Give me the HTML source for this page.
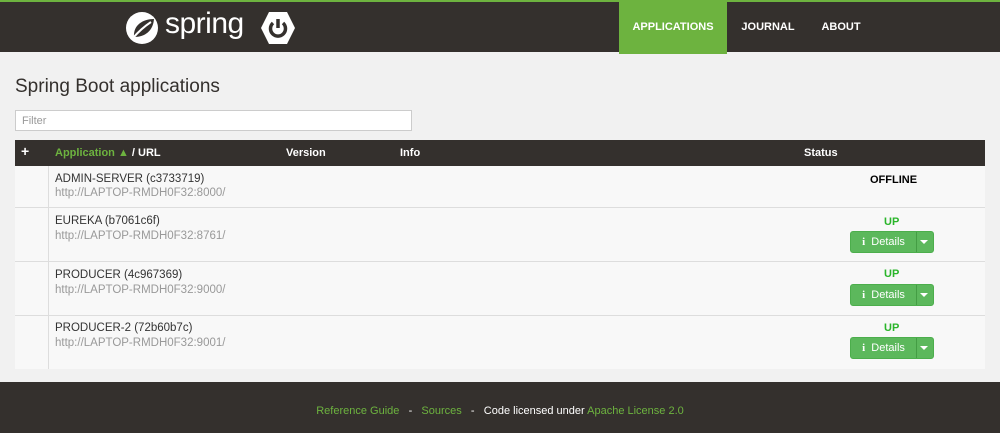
<!DOCTYPE html>
<html><head><style>
*{box-sizing:border-box;margin:0;padding:0}
html,body{width:1000px;height:433px;overflow:hidden}
body{background:#f1f1f1;font-family:"Liberation Sans",sans-serif;position:relative}
.nav{position:absolute;top:0;left:0;width:1000px;height:52px;background:#34302d;border-top:2px solid #6db33f}
.nav a{position:absolute;top:-2px;height:54px;line-height:54px;color:#fff;font-size:11px;font-weight:bold;text-align:center}
h1{position:absolute;left:15px;top:76px;font-size:19px;font-weight:normal;color:#34302d}
.filter{position:absolute;left:15px;top:110px;width:397px;height:21px;border:1px solid #ccc;background:#fff;font-size:11px;color:#999;padding:4px 6px}
.th{position:absolute;left:15px;top:140px;width:970px;height:26px;background:#34302d;color:#fff;font-size:11px;font-weight:bold}
.th span{position:absolute;top:7px}
.row{position:absolute;left:15px;width:970px;background:#f8f8f8;border-bottom:1px solid #ddd}
.row .c{position:absolute;left:33px;top:0;bottom:0;border-left:1px solid #ddd}
.n{position:absolute;left:40px;font-size:11.5px;color:#333}
.u{position:absolute;left:40px;font-size:11.5px;color:#999}
.st{position:absolute;font-size:11px;font-weight:bold}
.btn{position:absolute;left:835px;width:84px;height:22px;background:#5cb85c;border:1px solid #4cae4c;border-radius:3px;color:#fff;font-size:11px}
.btn .d{position:absolute;left:0;top:0;width:66px;height:20px;line-height:20px;text-align:center;border-right:1px solid #449d44}
.btn .ar{position:absolute;right:5px;top:8px;border-left:4px solid transparent;border-right:4px solid transparent;border-top:4px solid #fff}
.foot{position:absolute;left:0;top:382px;width:1000px;height:51px;background:#34302d;font-size:11px;color:#fff;text-align:center;line-height:58px}
.g{color:#6db33f}
</style></head><body>
<div class="nav">
<svg style="position:absolute;left:125px;top:9px" width="36" height="34" viewBox="0 0 36 34"><circle cx="17" cy="17" r="16" fill="#fff"/><path d="M9 26 C8 14 18 8 29 8 C28 20 20 26 9 26Z" fill="#34302d"/><path d="M8 27 C14 20 20 15 26 11" stroke="#fff" stroke-width="2" fill="none"/></svg>
<div style="position:absolute;left:165px;top:5px;color:#fff;font-size:30px;letter-spacing:-0.5px">spring</div>
<svg style="position:absolute;left:260px;top:9px" width="36" height="34" viewBox="0 0 36 34"><polygon points="9,1 27,1 35,17 27,33 9,33 1,17" fill="#fff"/><path d="M13 12 A7.5 7.5 0 1 0 23 12" stroke="#34302d" stroke-width="3.5" fill="none"/><line x1="18" y1="8" x2="18" y2="17" stroke="#34302d" stroke-width="3.5"/></svg>
<a style="left:619px;width:108px;background:#6db33f">APPLICATIONS</a>
<a style="left:727px;width:82px">JOURNAL</a>
<a style="left:809px;width:64px">ABOUT</a>
</div>
<h1>Spring Boot applications</h1>
<div class="filter">Filter</div>
<div class="th"><span style="left:6px;font-size:14px;top:3px">+</span><span style="left:40px"><span class="g" style="position:static">Application ▲</span> / URL</span><span style="left:271px">Version</span><span style="left:385px">Info</span><span style="left:789px">Status</span></div>
<div class="row" style="top:166px;height:42px"><div class="c"></div><div class="n" style="top:7px">ADMIN-SERVER (c3733719)</div><div class="u" style="top:21px">http://LAPTOP-RMDH0F32:8000/</div><div class="st" style="left:855px;top:8px;color:#000">OFFLINE</div></div>
<div class="row" style="top:208px;height:54px"><div class="c"></div><div class="n" style="top:7px">EUREKA (b7061c6f)</div><div class="u" style="top:22px">http://LAPTOP-RMDH0F32:8761/</div><div class="st" style="left:869px;top:8px;color:#2ab52a">UP</div><div class="btn" style="top:23px"><div class="d"><b style="font-family:'Liberation Serif',serif">i</b>&nbsp;&nbsp;Details</div><div class="ar"></div></div></div>
<div class="row" style="top:262px;height:54px"><div class="c"></div><div class="n" style="top:7px">PRODUCER (4c967369)</div><div class="u" style="top:22px">http://LAPTOP-RMDH0F32:9000/</div><div class="st" style="left:869px;top:6px;color:#2ab52a">UP</div><div class="btn" style="top:22px"><div class="d"><b style="font-family:'Liberation Serif',serif">i</b>&nbsp;&nbsp;Details</div><div class="ar"></div></div></div>
<div class="row" style="top:316px;height:53px;border-bottom:none"><div class="c"></div><div class="n" style="top:6px">PRODUCER-2 (72b60b7c)</div><div class="u" style="top:21px">http://LAPTOP-RMDH0F32:9001/</div><div class="st" style="left:869px;top:6px;color:#2ab52a">UP</div><div class="btn" style="top:21px"><div class="d"><b style="font-family:'Liberation Serif',serif">i</b>&nbsp;&nbsp;Details</div><div class="ar"></div></div></div>
<div class="foot"><span class="g">Reference Guide</span> &nbsp; - &nbsp; <span class="g">Sources</span> &nbsp; - &nbsp; Code licensed under <span class="g">Apache License 2.0</span></div>
</body></html>
